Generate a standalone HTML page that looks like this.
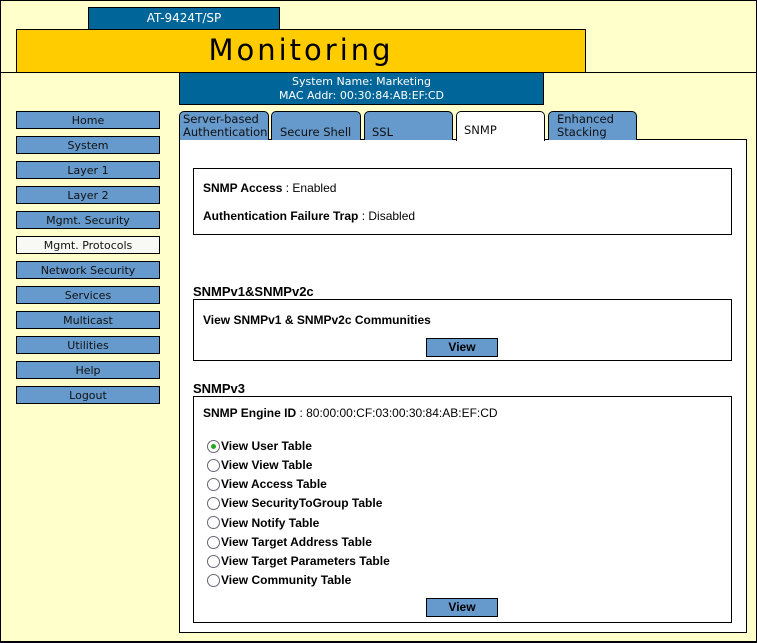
<!DOCTYPE html>
<html><head><style>
*{margin:0;padding:0;box-sizing:border-box}
body{width:757px;height:643px;background:#ffffcc;position:relative;overflow:hidden;font-family:"DejaVu Sans","Liberation Sans",sans-serif;}
.a{position:absolute}
.frame{left:0;top:0;width:757px;height:643px;border:1px solid #000;border-width:1px 1px 2px 1px}
.hl{left:0;top:72px;width:757px;height:1px;background:#000}
.at{left:88px;top:7px;width:192px;height:23px;background:#006699;border:1px solid #000;color:#fff;font-size:12px;text-align:center;line-height:20px}
.mon{left:16px;top:29px;width:570px;height:44px;background:#ffcc00;border:1px solid #000;font-size:29px;letter-spacing:3px;text-align:center;line-height:40px;color:#000}
.sys{left:179px;top:72px;width:365px;height:33px;background:#006699;border:1px solid #000;color:#fff;font-size:11px;text-align:center;line-height:14px;padding-top:2px}
.nav{left:16px;width:144px;height:18px;background:#6699cc;border:1px solid #000;font-size:11px;text-align:center;line-height:17px;color:#111}
.tab{top:111px;height:29px;background:#6699cc;border:1px solid #000;border-bottom:none;border-radius:5px 5px 0 0;font-size:11.5px;line-height:13px;padding:1px 3px 0;color:#111;overflow:hidden;white-space:nowrap}
.panel{left:179px;top:139px;width:568px;height:494px;background:#fff;border:1px solid #000}
.box{left:193px;width:539px;border:1px solid #000;background:#fff}
.f{font-family:"Liberation Sans",Arial,sans-serif;font-size:12px;color:#000}
.btn{left:426px;width:72px;height:19px;background:#6699cc;border:1px solid #000;font-size:12px;text-align:center;line-height:17px;font-family:"Liberation Sans",sans-serif;font-weight:bold}
.h{left:193px;font-family:"Liberation Sans",sans-serif;font-weight:bold;font-size:13px}
.r{left:207px;width:13px;height:13px;border-radius:50%;border:1px solid #667;background:#fff}
.rl{left:221px;font-family:"Liberation Sans",sans-serif;font-weight:bold;font-size:12px}
</style></head><body>
<div class="a frame"></div>
<div class="a hl"></div>
<div class="a at">AT-9424T/SP</div>
<div class="a mon">Monitoring</div>
<div class="a sys">System Name: Marketing<br>MAC Addr: 00:30:84:AB:EF:CD</div>

<div class="a nav" style="top:111px">Home</div>
<div class="a nav" style="top:136px">System</div>
<div class="a nav" style="top:161px">Layer 1</div>
<div class="a nav" style="top:186px">Layer 2</div>
<div class="a nav" style="top:211px">Mgmt. Security</div>
<div class="a nav" style="top:236px;background:#f8f8f4">Mgmt. Protocols</div>
<div class="a nav" style="top:261px">Network Security</div>
<div class="a nav" style="top:286px">Services</div>
<div class="a nav" style="top:311px">Multicast</div>
<div class="a nav" style="top:336px">Utilities</div>
<div class="a nav" style="top:361px">Help</div>
<div class="a nav" style="top:386px">Logout</div>

<div class="a panel"></div>
<div class="a tab" style="left:179px;width:90px">Server-based<br>Authentication</div>
<div class="a tab" style="left:271px;width:90px;padding-top:14px;padding-left:8px">Secure Shell</div>
<div class="a tab" style="left:364px;width:89px;padding-top:14px;padding-left:7px">SSL</div>
<div class="a tab" style="left:456px;width:89px;height:30px;background:#fff;padding-top:12px;padding-left:7px">SNMP</div>
<div class="a tab" style="left:548px;width:89px;padding-left:8px">Enhanced<br>Stacking</div>

<div class="a box" style="top:168px;height:67px"></div>
<div class="a f" style="left:203px;top:181px"><b>SNMP Access</b> : Enabled</div>
<div class="a f" style="left:203px;top:209px"><b>Authentication Failure Trap</b> : Disabled</div>

<div class="a h" style="top:284px">SNMPv1&amp;SNMPv2c</div>
<div class="a box" style="top:299px;height:62px"></div>
<div class="a f" style="left:203px;top:313px;font-weight:bold">View SNMPv1 &amp; SNMPv2c Communities</div>
<div class="a btn" style="top:338px">View</div>

<div class="a h" style="top:381px">SNMPv3</div>
<div class="a box" style="top:396px;height:227px"></div>
<div class="a f" style="left:203px;top:406px"><b>SNMP Engine ID</b> : 80:00:00:CF:03:00:30:84:AB:EF:CD</div>

<div class="a r" style="top:440px"><div style="position:absolute;left:3px;top:3px;width:5px;height:5px;border-radius:50%;background:#2a2"></div></div>
<div class="a rl" style="top:439px">View User Table</div>
<div class="a r" style="top:459px"></div><div class="a rl" style="top:458px">View View Table</div>
<div class="a r" style="top:478px"></div><div class="a rl" style="top:477px">View Access Table</div>
<div class="a r" style="top:497px"></div><div class="a rl" style="top:496px">View SecurityToGroup Table</div>
<div class="a r" style="top:516px"></div><div class="a rl" style="top:516px">View Notify Table</div>
<div class="a r" style="top:536px"></div><div class="a rl" style="top:535px">View Target Address Table</div>
<div class="a r" style="top:555px"></div><div class="a rl" style="top:554px">View Target Parameters Table</div>
<div class="a r" style="top:574px"></div><div class="a rl" style="top:573px">View Community Table</div>
<div class="a btn" style="top:598px">View</div>
</body></html>
